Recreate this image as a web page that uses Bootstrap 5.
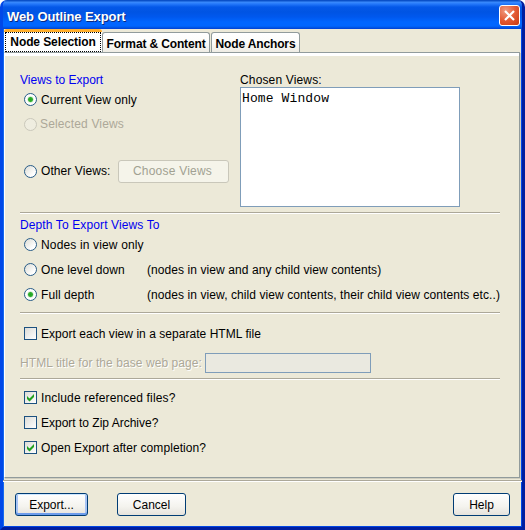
<!DOCTYPE html>
<html lang="en">
<head>
<meta charset="utf-8">
<title>Web Outline Export</title>
<link href="https://cdn.jsdelivr.net/npm/bootstrap@5.3.0/dist/css/bootstrap.min.css" rel="stylesheet">
<style>
body{width:525px;height:530px;overflow:hidden;background:#fff;color:#000;font:12px/16px "Liberation Sans",Arial,sans-serif;white-space:nowrap}
.dialog{width:525px;height:530px;background:#ece9d8;border-radius:7px 7px 0 0;overflow:hidden;border:solid;border-width:0 3px 3px;border-color:#0048e0 #001ea0 #001ea0 #0048e8;box-shadow:inset 1px 0 #166aee,inset -1px 0 #0046e4,inset 0 -1px #0046e4}
.titlebar{height:29px;margin:0 -3px;padding:1px 5px 0 7px;background:linear-gradient(#0a50c8 0,#0a50c8 1px,#3c8cfc 2px,#2478fa 4px,#0458e8 7px,#0054e3 12px,#0058ee 17px,#0066ff 22px,#0066ff 26px,#0050dc 28px,#003dd7 29px)}
.caption-text{font:bold 13px/18px "Liberation Sans",sans-serif;letter-spacing:-.1px;color:#fff;text-shadow:1px 1px #0a2a80;padding-top:3px}
.closer{width:21px;height:21px;border:1px solid #fff;border-radius:3px;background:radial-gradient(circle at 30% 25%,#f09a80,#e35a34 50%,#c83a10);padding:0;margin-top:1px}
.closer svg,.mark-svg{display:block}
.tabs{height:23px;padding-left:1px;gap:1px}
.tab-item{border:1px solid #919b9c;border-bottom:0;border-radius:3px 3px 0 0;background:linear-gradient(#fff,#fcfcfa 50%,#eeece4);font-weight:bold;letter-spacing:-.14px;height:20px;line-height:22px;text-align:center;color:#000}
.tab-item.active{height:23px;width:98px;border:0;border-top:3px solid #ffae2c;background:#fff;padding:0 1px;letter-spacing:-.1px;margin-right:-1px}
.tab-item.active span{display:block;height:20px;line-height:18px;border:1px dotted #000}
.page{height:426px;margin:0 2px 0 1px;border:1px solid #919b9c;border-left-color:#fff;padding:3px 19px 0 15px;background:#ece9d8;box-shadow:1px 1px #d0cebf;position:relative;letter-spacing:.08px}
.page::before{content:"";position:absolute;left:0;right:0;top:0;height:3px;background:#fff}
.rule{height:2px;border-top:1px solid #aca899;background:#fff}
.views{height:156px;padding-top:16px}
.views-head{height:15px;letter-spacing:0}
.blue-head{color:#0000f0}
.depth-head{padding-top:3px;height:18px;letter-spacing:.12px}
.opt{display:flex;align-items:center;height:25px;padding-left:4px}
.opt>span{flex:none}
.views .opt{height:24px}
.views .opt:nth-child(2){height:25px}
.opt .ctl{width:13px;height:13px;flex:none;margin-right:4px}
.opt .dim-label{margin-left:-1px;letter-spacing:.15px}
.opt.others{margin-top:23px}
.off{color:#aca899}
.ctl.rad{border:1px solid #285c88;border-radius:50%;background:linear-gradient(135deg,#dcdcd4,#fff 75%)}
.ctl.rad.on{background:radial-gradient(circle,#22a022 0,#30b030 2px,#eaf2e6 3.1px,#fff 4px)}
.ctl.rad.dim{border-color:#cac8bb;background:#efede0}
.ctl.box{border:1px solid #1c5180;background:linear-gradient(135deg,#dcdcd7,#fff)}
.field{border:1px solid #7f9db9;background:#fff}
.list-field{width:220px;height:120px;font:13px/16px "Liberation Mono",monospace;letter-spacing:.12px;padding:3px 1px}
.left-col{width:220px}
.name-col{width:106px}
.title-row{height:20px;margin-top:7px;text-shadow:1px 1px #fff}
.title-row .lbl{width:185px;letter-spacing:.07px}
.title-field{width:166px;height:20px;background:#eae9e0}
.xp{display:block;height:23px;padding:0;border:1px solid #003c74;border-radius:3px;background:linear-gradient(#fff,#f4f3ee 60%,#e6e3dc);font-size:12px;line-height:20px;color:#000;text-align:center}
.xp.main{width:73px;box-shadow:inset 0 -2px #6d9ceb,inset 0 1px #cee7ff,inset 2px 0 #a8c4f4,inset -2px 0 #a8c4f4}
.xp.dim{width:111px;margin-left:7px;padding-right:2px;letter-spacing:.22px;border-color:#c9c7ba;background:#f5f4ea;color:#a1a192}
.actions{padding:11px 12px 0}
</style>
</head>
<body>
<main class="dialog">
 <header class="titlebar d-flex justify-content-between align-items-center">
  <div class="caption-text">Web Outline Export</div>
  <button class="closer" aria-label="Close"><svg width="19" height="19" viewBox="0 0 19 19"><path d="M5 5l9 9M14 5l-9 9" stroke="#fff" stroke-width="2.2"/></svg></button>
 </header>
 <nav class="tabs d-flex align-items-end">
  <div class="tab-item active"><span>Node Selection</span></div>
  <div class="tab-item" style="width:108px">Format &amp; Content</div>
  <div class="tab-item" style="width:89px">Node Anchors</div>
 </nav>
 <section class="page">
  <div class="views d-flex">
   <div class="left-col">
    <div class="blue-head views-head">Views to Export</div>
    <label class="opt"><i class="ctl rad on"></i><span>Current View only</span></label>
    <label class="opt off"><i class="ctl rad dim"></i><span class="dim-label">Selected Views</span></label>
    <label class="opt others"><i class="ctl rad"></i><span style="width:70px">Other Views:</span><span class="xp dim">Choose Views</span></label>
   </div>
   <div>
    <div class="views-head" style="letter-spacing:.15px">Chosen Views:</div>
    <div class="field list-field">Home Window</div>
   </div>
  </div>
  <div class="rule"></div>
  <div class="blue-head depth-head">Depth To Export Views To</div>
  <label class="opt"><i class="ctl rad"></i><span style="letter-spacing:.15px">Nodes in view only</span></label>
  <label class="opt"><i class="ctl rad"></i><span class="name-col">One level down</span><span>(nodes in view and any child view contents)</span></label>
  <label class="opt"><i class="ctl rad on"></i><span class="name-col">Full depth</span><span>(nodes in view, child view contents, their child view contents etc..)</span></label>
  <div class="rule" style="margin-top:5px"></div>
  <label class="opt" style="margin-top:7px"><i class="ctl box"></i><span style="letter-spacing:.04px">Export each view in a separate HTML file</span></label>
  <div class="title-row d-flex align-items-center off"><span class="lbl">HTML title for the base web page:</span><span class="field title-field"></span></div>
  <div class="rule" style="margin-top:5px"></div>
  <label class="opt" style="margin-top:5px"><i class="ctl box"><svg class="mark-svg" width="11" height="11"><path d="M2 4v3l2.5 2.5L9 5V2L4.5 6.5z" fill="#21a121"/></svg></i><span style="letter-spacing:.15px">Include referenced files?</span></label>
  <label class="opt"><i class="ctl box"></i><span style="letter-spacing:0">Export to Zip Archive?</span></label>
  <label class="opt"><i class="ctl box"><svg class="mark-svg" width="11" height="11"><path d="M2 4v3l2.5 2.5L9 5V2L4.5 6.5z" fill="#21a121"/></svg></i><span>Open Export after completion?</span></label>
 </section>
 <div class="rule" style="margin-top:2px"></div>
 <footer class="actions d-flex">
  <button class="xp main">Export...</button>
  <button class="xp" style="width:69px;margin-left:29px">Cancel</button>
  <button class="xp ms-auto" style="width:57px">Help</button>
 </footer>
</main>
<script src="https://cdn.jsdelivr.net/npm/bootstrap@5.3.0/dist/js/bootstrap.bundle.min.js"></script>
</body>
</html>
